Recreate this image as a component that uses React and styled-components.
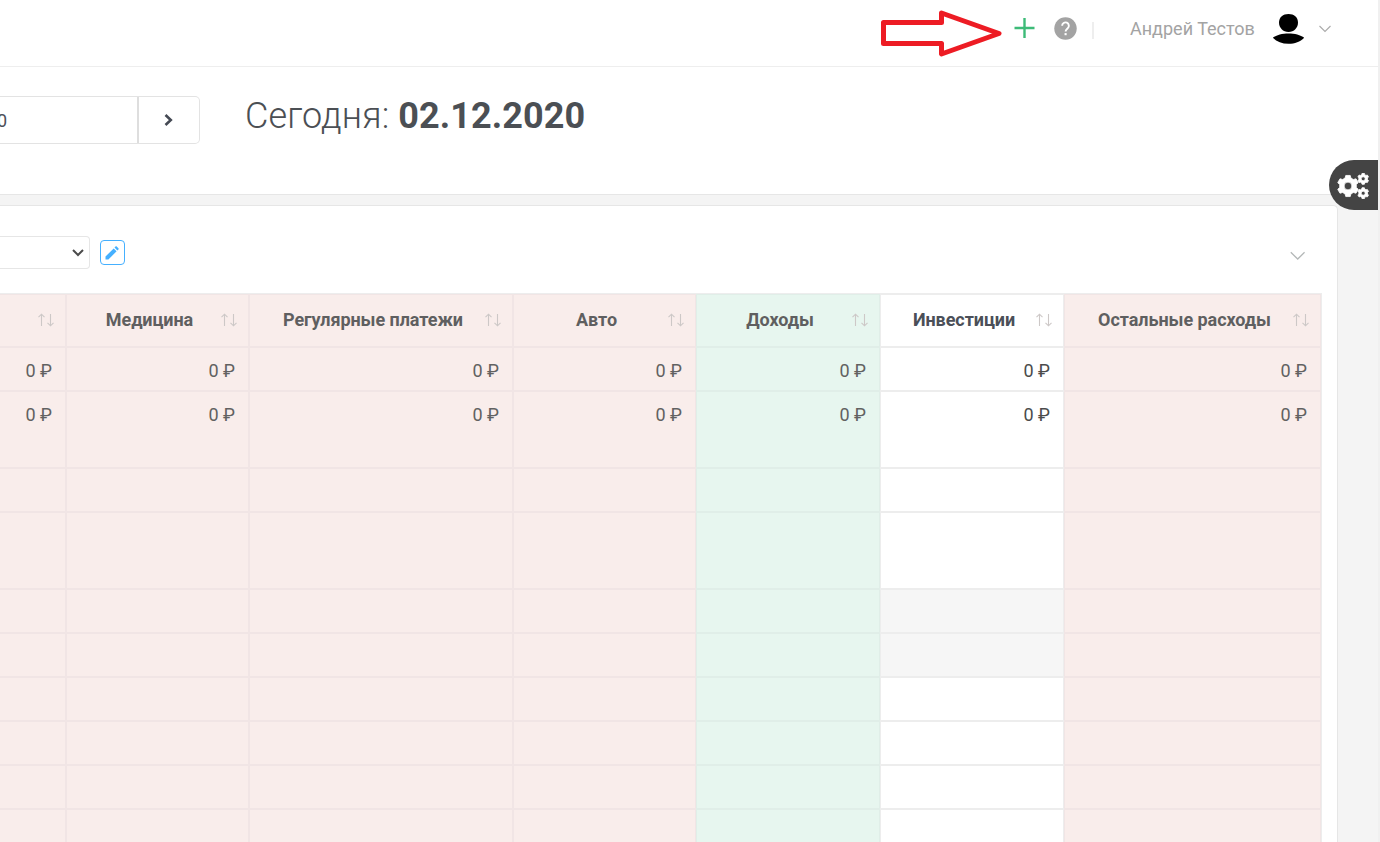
import React from "react";
import styled, { createGlobalStyle } from "styled-components";

const Global = createGlobalStyle`
  * { box-sizing: border-box; }
  body { margin: 0; overflow: hidden; background: #f4f4f4; font-family: Roboto, "Liberation Sans", sans-serif; color: #4b5058; }
`;

const Page = styled.div`
  position: relative;
  display: flex;
  flex-direction: column;
  width: 1380px;
  height: 842px;
  overflow: hidden;
  background: #f4f4f4;
  border-right: 2px solid #f0f0f0;
`;

const TopBar = styled.header`
  display: flex;
  align-items: center;
  justify-content: flex-end;
  flex: none;
  height: 67px;
  padding: 0 47px 9px 0;
  background: #fff;
  border-bottom: 1px solid #eee;
`;

const PointerArrow = styled.svg`
  flex: none;
  margin: 9px 12px 0 0;
`;

const PlusIcon = styled.svg`
  flex: none;
  margin: 0 19px 1px 0;
`;

const HelpIcon = styled.svg`
  flex: none;
  margin-right: 15px;
`;

const Divider = styled.span`
  width: 2px;
  height: 17px;
  margin: 3px 36px 0 0;
  background: #eee;
`;

const UserName = styled.span`
  width: 125px;
  font-size: 18px;
  line-height: 24px;
  white-space: nowrap;
  color: #a3a3a3;
`;

const Avatar = styled.svg`
  flex: none;
  margin: 0 14px 0 17px;
`;

const DateBar = styled.section`
  display: flex;
  align-items: flex-start;
  flex: none;
  height: 128px;
  padding-top: 29px;
  background: #fff;
  border-bottom: 1px solid #e6e6e6;
`;

const DateGroup = styled.div`
  display: flex;
  width: 200px;
  height: 48px;
  border: 1px solid #e3e3e3;
  border-left: 0;
  border-radius: 0 5px 5px 0;
`;

const DateField = styled.div`
  width: 139px;
  border-right: 2px solid #dedede;
  font-size: 18px;
  line-height: 48px;
  text-indent: -3px;
  overflow: hidden;
`;

const NextButton = styled.button`
  display: flex;
  flex: 1;
  align-items: center;
  justify-content: center;
  padding: 0 1px 0 0;
  border: 0;
  background: transparent;
`;

const Today = styled.h1`
  margin: 0 0 0 45px;
  font-size: 36px;
  letter-spacing: 0.08px;
  line-height: 40px;
  font-weight: 300;
  white-space: nowrap;
  color: #4b4f54;

  b { font-weight: 700; }
`;

const Card = styled.main`
  flex: 1;
  width: 1338px;
  min-height: 0;
  margin-top: 10px;
  background: #fff;
  border: solid #e6e6e6;
  border-width: 1px 1px 0 0;
  border-radius: 0 5px 0 0;
  overflow: hidden;
`;

const CardTools = styled.div`
  display: flex;
  align-items: flex-start;
  height: 87px;
  padding: 30px 32px 0 0;
`;

const SelectBox = styled.div`
  display: flex;
  align-items: center;
  justify-content: flex-end;
  width: 90px;
  height: 33px;
  padding-right: 5px;
  border: 1px solid #e6e6e6;
  border-left: 0;
  border-radius: 0 4px 4px 0;
`;

const EditButton = styled.button`
  display: flex;
  align-items: center;
  justify-content: center;
  width: 25px;
  height: 25px;
  margin: 4px auto 0 10px;
  padding: 0 1px 0 0;
  border: 1px solid #45b0ff;
  border-radius: 4px;
  background: #fff;
`;

const CollapseIcon = styled.svg`
  margin-top: 15px;
`;

const Table = styled.div`
  width: 1322px;
  border: solid #ededed;
  border-width: 1px 1px 0 0;
`;

const Row = styled.div`
  display: grid;
  grid-template-columns: 66px 183px 264px 183px 184px 184px 257px;
  height: ${(p) => p.$height}px;
`;

const fills = { red: "#f9edeb", green: "#e7f6ef", plain: "#fff", muted: "#f6f6f6" };
const lines = { red: "#f1e5e5", green: "#e0eee8", plain: "#ededed", muted: "#ededed" };

const Cell = styled.div`
  padding: 12px 13px 0 0;
  background: ${(p) => fills[p.$tone]};
  border: 1px solid ${(p) => lines[p.$tone]};
  color: ${(p) => (p.$tone === "plain" ? "#4b4b4b" : "#616161")};
  font-size: 18px;
  line-height: 21px;
  text-align: right;
  white-space: nowrap;

  &:first-child { border-left: 0; }
`;

const HeadCell = styled(Cell)`
  display: flex;
  align-items: center;
  padding: 0 10px 2px 0;
  font-weight: 700;
  color: ${(p) => (p.$tone === "plain" ? "#4b4f58" : "#5f5f60")};
`;

const HeadLabel = styled.span`
  flex: 1;
  padding-left: 11px;
  letter-spacing: -0.06px;
  text-align: center;
`;

const SettingsTab = styled.aside`
  position: absolute;
  top: 160px;
  right: 0;
  display: flex;
  align-items: center;
  width: 49px;
  height: 50px;
  padding: 1px 0 0 8px;
  border-radius: 25px 0 0 25px;
  background: #444;
`;

const SortIcon = () => (
  <svg width="17" height="14" viewBox="0 0 17 14" fill="none" stroke="#cdc8c7" strokeWidth="1.1">
    <path d="M3.5 13V1.5M.5 4.2l3-3 3 3M12.5 1v11.5M9.5 9.8l3 3 3-3" />
  </svg>
);

const gearPath = (cx, cy, r, teeth) => {
  const pts = [];
  const step = (Math.PI * 2) / teeth;
  for (let i = 0; i < teeth; i += 1) {
    const a = i * step - Math.PI / 2;
    [[-0.34, 0.78], [-0.2, 1], [0.2, 1], [0.34, 0.78]].forEach(([t, k]) => {
      const q = a + t * step;
      pts.push(`${(cx + Math.cos(q) * r * k).toFixed(2)} ${(cy + Math.sin(q) * r * k).toFixed(2)}`);
    });
  }
  const h = r * 0.36;
  return `M${pts.join("L")}ZM${cx - h} ${cy}a${h} ${h} 0 1 0 ${2 * h} 0a${h} ${h} 0 1 0 ${-2 * h} 0Z`;
};

const Gears = () => (
  <svg width="33" height="26" viewBox="0 0 33 26" fill="#fff" stroke="#fff" strokeWidth=".8" strokeLinejoin="round" fillRule="evenodd">
    <path d={gearPath(11, 13, 10.8, 6)} />
    <path d={gearPath(26.2, 5.8, 5.6, 6)} />
    <path d={gearPath(26.2, 20.2, 5.6, 6)} />
  </svg>
);

const columns = [
  { name: "", tone: "red" },
  { name: "Медицина", tone: "red" },
  { name: "Регулярные платежи", tone: "red" },
  { name: "Авто", tone: "red" },
  { name: "Доходы", tone: "green" },
  { name: "Инвестиции", tone: "plain" },
  { name: "Остальные расходы", tone: "red" },
];

const rows = [
  { height: 44, value: "0 ₽" },
  { height: 77, value: "0 ₽" },
  { height: 44 },
  { height: 77 },
  { height: 44, muted: true },
  { height: 44, muted: true },
  { height: 44 },
  { height: 44 },
  { height: 44 },
  { height: 44 },
];

export default function App() {
  return (
    <Page>
      <Global />
      <TopBar>
        <PointerArrow width="122" height="48" viewBox="0 0 122 48" fill="none" stroke="#ed1c24" strokeWidth="5" strokeLinejoin="round">
          <path d="M3.5 13.5H61.500V4L119 24.500 61.500 45V34.500H3.500Z" />
        </PointerArrow>
        <PlusIcon width="21" height="20" viewBox="0 0 21 20" fill="none" stroke="#3dbb78" strokeWidth="2.4">
          <path d="M10.500 0v20M.5 10h20" />
        </PlusIcon>
        <HelpIcon width="23" height="23" viewBox="0 0 24 24" fill="#a3a3a3">
          <circle cx="12" cy="12" r="11.700" />
          <path d="M8.500 9.200a3.500 3.500 0 1 1 5.800 2.600c-1.300 1.100-2.200 1.600-2.200 3.300" fill="none" stroke="#fff" strokeWidth="2" />
          <path d="M11 16.800h2.200v2.200H11z" fill="#fff" />
        </HelpIcon>
        <Divider />
        <UserName>Андрей Тестов</UserName>
        <Avatar width="33" height="32" viewBox="0 0 33 32">
          <path d="M16.500 1c5.500 0 9.500 3.300 9.500 8.500 0 5.300-4 9.500-9.500 9.500S7 14.800 7 9.500C7 4.300 11 1 16.500 1Z" />
          <path d="M.8 24.700C8 19 25 19 32.200 24.700 28 28.800 23 30.800 16.500 30.800S5 28.800.8 24.700Z" />
        </Avatar>
        <svg width="12" height="8" viewBox="0 0 12 8" fill="none" stroke="#aaa" strokeWidth="1.1">
          <path d="M.5 1l5.500 5.500L11.500 1" />
        </svg>
      </TopBar>
      <DateBar>
        <DateGroup>
          <DateField>0</DateField>
          <NextButton aria-label="Вперёд">
            <svg width="9" height="12" viewBox="0 0 9 12" fill="none" stroke="#454a54" strokeWidth="2.600">
              <path d="M1.500 1L6.800 6l-5.300 5" />
            </svg>
          </NextButton>
        </DateGroup>
        <Today>Сегодня: <b>02.12.2020</b></Today>
      </DateBar>
      <Card>
        <CardTools>
          <SelectBox>
            <svg width="12" height="8" viewBox="0 0 12 8" fill="none" stroke="#4b4b4b" strokeWidth="2">
              <path d="M1 1l5 5 5-5" />
            </svg>
          </SelectBox>
          <EditButton aria-label="Изменить">
            <svg width="14" height="14" viewBox="0 0 14 14" fill="#45b0ff">
              <path d="M.5 13.500v-3L8.700 2.400l2.900 2.900-8.200 8.200ZM9.500 1.600l1-1c.4-.4.8-.4 1.200 0l1.700 1.700c.4.4.4.8 0 1.200l-1 1Z" />
            </svg>
          </EditButton>
          <CollapseIcon width="15" height="9" viewBox="0 0 15 9" fill="none" stroke="#b4b8b8" strokeWidth="1.300">
            <path d="M.8 1.300l6.900 6.700 6.900-6.700" />
          </CollapseIcon>
        </CardTools>
        <Table>
          <Row $height={53}>
            {columns.map((c) => (
              <HeadCell key={c.name} $tone={c.tone}>
                <HeadLabel>{c.name}</HeadLabel>
                <SortIcon />
              </HeadCell>
            ))}
          </Row>
          {rows.map((r, i) => (
            <Row key={i} $height={r.height}>
              {columns.map((c) => (
                <Cell key={c.name} $tone={r.muted && c.tone === "plain" ? "muted" : c.tone}>{r.value}</Cell>
              ))}
            </Row>
          ))}
        </Table>
      </Card>
      <SettingsTab><Gears /></SettingsTab>
    </Page>
  );
}
